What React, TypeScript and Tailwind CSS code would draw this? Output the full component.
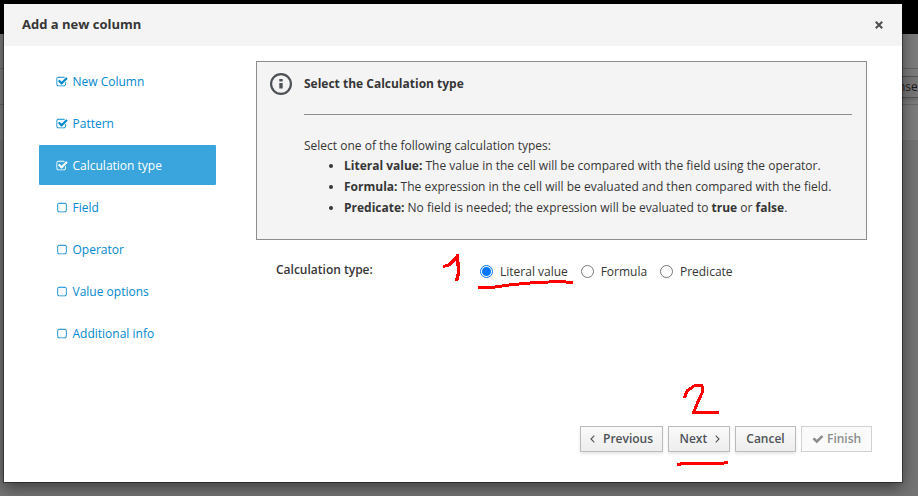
import React from "react";

const CHECKED =
  "M1472 930v318q0 119-84.5 203.5t-203.5 84.5h-832q-119 0-203.5-84.5t-84.5-203.5v-832q0-119 84.5-203.5t203.5-84.5h832q63 0 117 25 15 7 18 23 3 17-9 29l-49 49q-10 10-23 10-3 0-9-2-23-6-45-6h-832q-66 0-113 47t-47 113v832q0 66 47 113t113 47h832q66 0 113-47t47-113v-254q0-13 9-22l64-64q10-10 23-10 6 0 12 3 20 8 20 29zm231-489l-814 814q-24 24-57 24t-57-24l-430-430q-24-24-24-57t24-57l110-110q24-24 57-24t57 24l263 263 647-647q24-24 57-24t57 24l110 110q24 24 24 57t-24 57z";
const UNCHECKED =
  "M1312 256h-832q-66 0-113 47t-47 113v832q0 66 47 113t113 47h832q66 0 113-47t47-113v-832q0-66-47-113t-113-47zm288 160v832q0 119-84.5 203.5t-203.5 84.5h-832q-119 0-203.5-84.5t-84.5-203.5v-832q0-119 84.5-203.5t203.5-84.5h832q119 0 203.5 84.5t84.5 203.5z";
const TICK =
  "M1671 566q0 40-28 68l-724 724-136 136q-28 28-68 28t-68-28l-136-136-362-362q-28-28-28-68t28-68l136-136q28-28 68-28t68 28l294 295 656-657q28-28 68-28t68 28l136 136q28 28 28 68z";

const steps = [
  { label: "New Column", done: true },
  { label: "Pattern", done: true },
  { label: "Calculation type", done: true, active: true },
  { label: "Field", done: false },
  { label: "Operator", done: false },
  { label: "Value options", done: false },
  { label: "Additional info", done: false },
];

function Glyph({ d, className }: { d: string; className: string }) {
  return (
    <svg viewBox="0 0 1792 1792" className={className} fill="currentColor">
      <path d={d} />
    </svg>
  );
}

function Backdrop() {
  return (
    <div className="absolute inset-0 flex flex-col bg-[#747474]">
      <div className="h-[34px] bg-black" />
      <div className="h-[35px] border-b border-[#646464] bg-[#7c7c7c]" />
      <div className="flex h-9 items-start justify-end border-b border-[#686868] bg-[#7c7c7c] pt-[7px]">
        <div className="flex h-[22px] w-[20px] items-center border-y border-[#555] bg-[#777] text-[12px] text-[#1b1b1b] shadow-[0_2px_3px_rgba(0,0,0,0.15)]">
          nser
        </div>
      </div>
      <div className="h-[35px] bg-[#7c7c7c]" />
    </div>
  );
}

function Radio({ label, checked }: { label: string; checked?: boolean }) {
  return (
    <label className="flex items-center gap-[7px]">
      <span
        className={
          checked
            ? "mb-px flex size-[13px] items-center justify-center rounded-full border border-[#0075ff]"
            : "mb-px flex size-[13px] items-center justify-center rounded-full border border-[#767676]"
        }
      >
        {checked && <span className="size-[9px] rounded-full bg-[#0075ff]" />}
      </span>
      {label}
    </label>
  );
}

const button =
  "flex h-[26px] items-center border border-[#bbb] bg-linear-to-b from-[#fafafa] to-[#ededed] text-[12px] font-semibold text-[#4d5258] shadow-[0_2px_3px_rgba(3,3,3,0.1)]";

export default function App() {
  return (
    <div className="relative h-[496px] w-[918px] overflow-hidden font-['Open_Sans',sans-serif] text-[12px] leading-5 text-[#363636]">
      <Backdrop />
      <div className="relative ml-1 flex h-[482px] w-[898px] flex-col pt-1">
        <div className="flex min-h-0 flex-1 flex-col bg-white shadow-[0_0_0_1px_rgba(0,0,0,0.4),0_5px_15px_rgba(0,0,0,0.5)]">
          <header className="flex h-[42px] shrink-0 items-center justify-between bg-[#f4f4f4] pr-[19px] pb-[2px] pl-[18px]">
            <h4 className="text-[13px] font-bold">Add a new column</h4>
            <svg viewBox="0 0 8 8" className="mt-px size-2 stroke-[#4d4d4d]" strokeWidth="2">
              <path d="M.8.8 7.2 7.2M7.2.8.8 7.2" />
            </svg>
          </header>
          <div className="flex flex-1 pl-[35px]">
            <nav className="flex w-[177px] flex-col gap-[2px] pt-[15px]">
              {steps.map((s) => (
                <a
                  key={s.label}
                  className={
                    s.active
                      ? "flex h-10 items-center rounded-[1px] bg-[#39a5dc] pt-[2px] pl-[17px] text-white"
                      : "flex h-10 items-center pt-[2px] pl-[17px] text-[#0088ce]"
                  }
                >
                  <Glyph d={s.done ? CHECKED : UNCHECKED} className="mr-[4.5px] size-3" />
                  {s.label}
                </a>
              ))}
            </nav>
            <main className="ml-10 flex w-[611px] flex-col pt-[15px]">
              <section className="flex h-[179px] border border-[#8b8d8f] bg-[#f4f4f4] pr-[14px] pl-[13px]">
                <svg viewBox="0 0 22 22" className="mt-[10.5px] mr-3 size-[22px] shrink-0">
                  <circle cx="11" cy="11" r="9.9" fill="none" stroke="#4d5258" strokeWidth="2.2" />
                  <path d="M9.3 6h3.4v2.6H9.3zM9.3 10h3.4v5.4H9.3z" fill="#4d5258" />
                </svg>
                <div className="flex-1">
                  <div className="flex h-[53px] items-center border-b border-[#8b8d8f] pb-[9px] font-bold">
                    Select the Calculation type
                  </div>
                  <p className="mt-[21px]">Select one of the following calculation types:</p>
                  <ul className="-mt-px list-disc pl-10 leading-[21px]">
                    <li>
                      <b>Literal value:</b> The value in the cell will be compared with the field using the operator.
                    </li>
                    <li>
                      <b>Formula:</b> The expression in the cell will be evaluated and then compared with the field.
                    </li>
                    <li>
                      <b>Predicate:</b> No field is needed; the expression will be evaluated to <b>true</b> or{" "}
                      <b>false</b>.
                    </li>
                  </ul>
                </div>
              </section>
              <div className="mt-5 flex pl-5">
                <span className="w-[204px] font-semibold">Calculation type:</span>
                <div className="flex gap-[12.8px] pt-[2px]">
                  <Radio label="Literal value" checked />
                  <Radio label="Formula" />
                  <Radio label="Predicate" />
                </div>
              </div>
            </main>
          </div>
          <footer className="flex justify-end gap-[5px] pr-[30px] pb-[30px]">
            <button className={button + " w-[83px] pl-[9px]"}>
              <svg viewBox="0 0 5 8" className="mr-[8px] h-[8px] w-[5px] fill-none stroke-[#4d5258]" strokeWidth="1.1">
                <path d="M4.3.7 1 4l3.3 3.3" />
              </svg>
              Previous
            </button>
            <button className={button + " w-[62px] pl-[10.5px]"}>
              Next
              <svg viewBox="0 0 5 8" className="ml-[7.5px] h-[8px] w-[5px] fill-none stroke-[#4d5258]" strokeWidth="1.1">
                <path d="M.7.7 4 4 .7 7.3" />
              </svg>
            </button>
            <button className={button + " w-[61px] justify-center"}>Cancel</button>
            <button className="flex h-[26px] w-[71px] items-center border border-[#d1d1d1] bg-[#fafafa] pl-[10px] font-semibold text-[#8b8d8f]">
              <Glyph d={TICK} className="mr-[3px] size-3" />
              Finish
            </button>
          </footer>
        </div>
      </div>
      <svg
        viewBox="0 0 918 496"
        className="pointer-events-none absolute inset-0 h-full w-full"
        fill="none"
        stroke="#ff0000"
        strokeWidth="3"
        strokeLinejoin="round"
        shapeRendering="crispEdges"
      >
        <path d="M443 266.500 449 265 457 257" />
        <path d="M457.500 254V261L458.500 267V273L456.500 281" strokeWidth="3.600" />
        <path d="M478 287.500H492L509 285 530 283 558 281.500 573 282.500" />
        <path d="M684.500 398 687 391 694 386 702 385.500V393L697 404 693.500 412.500H719" />
        <path d="M677 464.500 684 463.500 722 463.500 728 462" />
      </svg>
    </div>
  );
}
